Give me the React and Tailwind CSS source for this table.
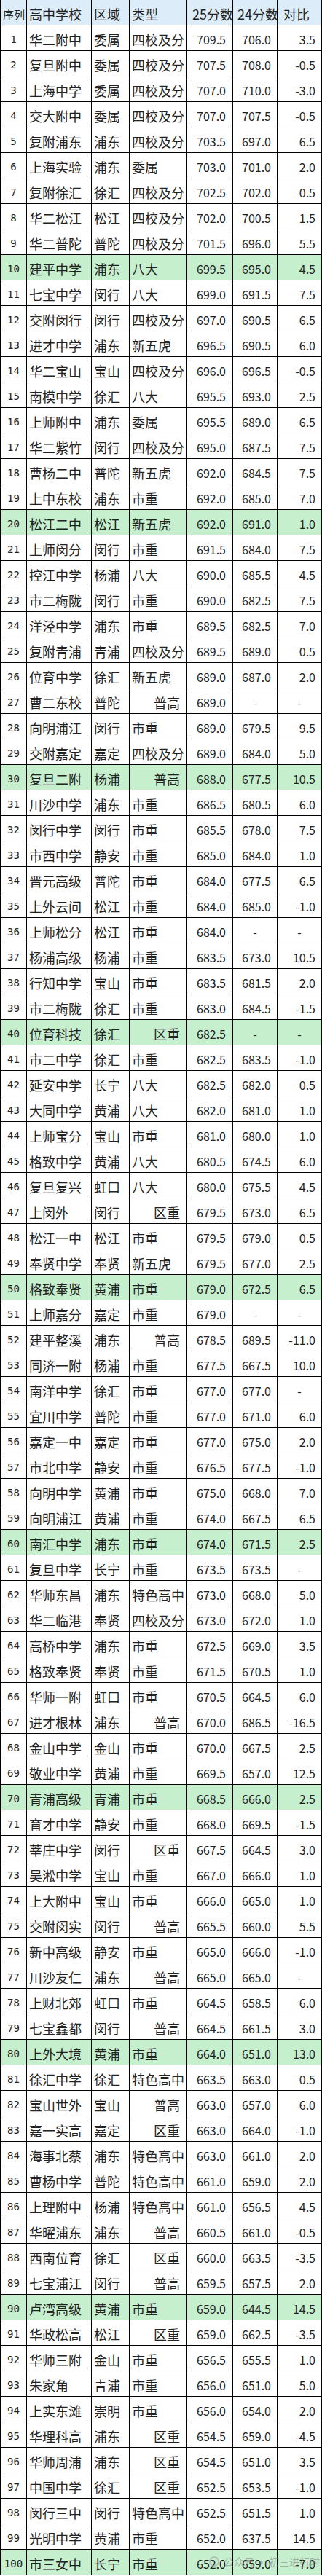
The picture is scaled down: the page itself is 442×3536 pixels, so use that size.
import React from "react";

const raw = `华二附中|委属|四校及分|709.5|706.0|3.5
复旦附中|委属|四校及分|707.5|708.0|-0.5
上海中学|委属|四校及分|707.0|710.0|-3.0
交大附中|委属|四校及分|707.0|707.5|-0.5
复附浦东|浦东|四校及分|703.5|697.0|6.5
上海实验|浦东|委属|703.0|701.0|2.0
复附徐汇|徐汇|四校及分|702.5|702.0|0.5
华二松江|松江|四校及分|702.0|700.5|1.5
华二普陀|普陀|四校及分|701.5|696.0|5.5
建平中学|浦东|八大|699.5|695.0|4.5
七宝中学|闵行|八大|699.0|691.5|7.5
交附闵行|闵行|四校及分|697.0|690.5|6.5
进才中学|浦东|新五虎|696.5|690.5|6.0
华二宝山|宝山|四校及分|696.0|696.5|-0.5
南模中学|徐汇|八大|695.5|693.0|2.5
上师附中|浦东|委属|695.5|689.0|6.5
华二紫竹|闵行|四校及分|695.0|687.5|7.5
曹杨二中|普陀|新五虎|692.0|684.5|7.5
上中东校|浦东|市重|692.0|685.0|7.0
松江二中|松江|新五虎|692.0|691.0|1.0
上师闵分|闵行|市重|691.5|684.0|7.5
控江中学|杨浦|八大|690.0|685.5|4.5
市二梅陇|闵行|市重|690.0|682.5|7.5
洋泾中学|浦东|市重|689.5|682.5|7.0
复附青浦|青浦|四校及分|689.5|689.0|0.5
位育中学|徐汇|新五虎|689.0|687.0|2.0
曹二东校|普陀|普高|689.0|-|-
向明浦江|闵行|市重|689.0|679.5|9.5
交附嘉定|嘉定|四校及分|689.0|684.0|5.0
复旦二附|杨浦|普高|688.0|677.5|10.5
川沙中学|浦东|市重|686.5|680.5|6.0
闵行中学|闵行|市重|685.5|678.0|7.5
市西中学|静安|市重|685.0|684.0|1.0
晋元高级|普陀|市重|684.0|677.5|6.5
上外云间|松江|市重|684.0|685.0|-1.0
上师松分|松江|市重|684.0|-|-
杨浦高级|杨浦|市重|683.5|673.0|10.5
行知中学|宝山|市重|683.5|681.5|2.0
市二梅陇|徐汇|市重|683.0|684.5|-1.5
位育科技|徐汇|区重|682.5|-|-
市二中学|徐汇|市重|682.5|683.5|-1.0
延安中学|长宁|八大|682.5|682.0|0.5
大同中学|黄浦|八大|682.0|681.0|1.0
上师宝分|宝山|市重|681.0|680.0|1.0
格致中学|黄浦|八大|680.5|674.5|6.0
复旦复兴|虹口|八大|680.0|675.5|4.5
上闵外|闵行|区重|679.5|673.0|6.5
松江一中|松江|市重|679.5|679.0|0.5
奉贤中学|奉贤|新五虎|679.5|677.0|2.5
格致奉贤|黄浦|市重|679.0|672.5|6.5
上师嘉分|嘉定|市重|679.0|-|-
建平整溪|浦东|普高|678.5|689.5|-11.0
同济一附|杨浦|市重|677.5|667.5|10.0
南洋中学|徐汇|市重|677.0|677.0|-
宜川中学|普陀|市重|677.0|671.0|6.0
嘉定一中|嘉定|市重|677.0|675.0|2.0
市北中学|静安|市重|676.5|677.5|-1.0
向明中学|黄浦|市重|675.0|668.0|7.0
向明浦江|黄浦|市重|674.0|667.5|6.5
南汇中学|浦东|市重|674.0|671.5|2.5
复旦中学|长宁|市重|673.5|673.5|-
华师东昌|浦东|特色高中|673.0|668.0|5.0
华二临港|奉贤|四校及分|673.0|672.0|1.0
高桥中学|浦东|市重|672.5|669.0|3.5
格致奉贤|奉贤|市重|671.5|670.5|1.0
华师一附|虹口|市重|670.5|664.5|6.0
进才根林|浦东|普高|670.0|686.5|-16.5
金山中学|金山|市重|670.0|667.5|2.5
敬业中学|黄浦|市重|669.5|657.0|12.5
青浦高级|青浦|市重|668.5|666.0|2.5
育才中学|静安|市重|668.0|669.5|-1.5
莘庄中学|闵行|区重|667.5|664.5|3.0
吴淞中学|宝山|市重|667.0|666.0|1.0
上大附中|宝山|市重|666.0|665.0|1.0
交附闵实|闵行|普高|665.5|660.0|5.5
新中高级|静安|市重|665.0|666.0|-1.0
川沙友仁|浦东|普高|665.0|665.0|-
上财北郊|虹口|市重|664.5|658.5|6.0
七宝鑫都|闵行|普高|664.5|661.5|3.0
上外大境|黄浦|市重|664.0|651.0|13.0
徐汇中学|徐汇|特色高中|663.5|663.0|0.5
宝山世外|宝山|普高|663.0|657.0|6.0
嘉一实高|嘉定|区重|663.0|664.0|-1.0
海事北蔡|浦东|特色高中|663.0|661.0|2.0
曹杨中学|普陀|特色高中|661.0|659.0|2.0
上理附中|杨浦|特色高中|661.0|656.5|4.5
华曜浦东|浦东|普高|660.5|661.0|-0.5
西南位育|徐汇|区重|660.0|663.5|-3.5
七宝浦江|闵行|普高|659.5|657.5|2.0
卢湾高级|黄浦|市重|659.0|644.5|14.5
华政松高|松江|区重|659.0|662.5|-3.5
华师三附|金山|市重|656.5|655.5|1.0
朱家角|青浦|市重|656.0|651.0|5.0
上实东滩|崇明|市重|656.0|654.0|2.0
华理科高|浦东|区重|654.5|659.0|-4.5
华师周浦|浦东|区重|654.5|651.0|3.5
中国中学|徐汇|区重|652.5|653.5|-1.0
闵行三中|闵行|特色高中|652.5|651.5|1.0
光明中学|黄浦|市重|652.0|637.5|14.5
市三女中|长宁|市重|652.0|659.0|-7.0`;

const rows = raw.split("\n").map((line, i) => {
  const [name, area, kind, s25, s24, diff] = line.split("|");
  return { n: i + 1, name, area, kind, s25, s24, diff };
});

const cell =
  "flex items-center h-[35px] border-r border-b border-black pt-1 whitespace-nowrap overflow-hidden";

function Row({ r }) {
  const bg = r.n % 10 === 0 ? "bg-[#c6efce]" : "bg-white";
  const rightKind = r.kind === "普高" || r.kind === "区重";
  return (
    <>
      <div className={`${cell} ${bg} justify-center font-['DejaVu_Sans_Mono',monospace] text-[14px]`}>
        {r.n}
      </div>
      <div className={`${cell} ${bg} pl-[3px]`}>{r.name}</div>
      <div className={`${cell} ${bg} pl-[3px]`}>{r.area}</div>
      <div className={`${cell} ${bg} ${rightKind ? "justify-end pr-[9px]" : "pl-[3px]"}`}>
        {r.kind}
      </div>
      <div className={`${cell} ${bg} justify-end pr-[9px] text-[16px]`}>{r.s25}</div>
      <div className={`${cell} ${bg} text-[16px] ${r.s24 === "-" ? "justify-center" : "justify-end pr-[8px]"}`}>
        {r.s24}
      </div>
      <div className={`${cell} ${bg} text-[16px] ${r.diff === "-" ? "justify-center" : "justify-end pr-[8px]"}`}>
        {r.diff}
      </div>
    </>
  );
}

export default function App() {
  return (
    <div className="relative w-[442px] bg-white text-[#222] text-[18px] leading-none font-['Noto_Sans_CJK_SC','Noto_Sans',sans-serif]">
      <div className="grid grid-cols-[36px_89px_52px_79px_63px_61px_61px] border-l border-black">
        <div className={`${cell} bg-[#dcedf9] pl-[3px] text-[15px]`}>序列</div>
        <div className={`${cell} bg-[#dcedf9] pl-[3px]`}>高中学校</div>
        <div className={`${cell} bg-[#dcedf9] pl-[3px]`}>区域</div>
        <div className={`${cell} bg-[#dcedf9] pl-[3px]`}>类型</div>
        <div className={`${cell} bg-[#dcedf9] pl-[7px]`}>25分数</div>
        <div className={`${cell} bg-[#dcedf9] pl-[6px]`}>24分数</div>
        <div className={`${cell} bg-[#dcedf9] pl-[8px]`}>对比</div>
        {rows.map((r) => (
          <Row key={r.n} r={r} />
        ))}
      </div>
      <div className="absolute left-[287px] top-[3509px] flex items-center gap-[6px] text-[14px] text-[#888]/60 pointer-events-none">
        <span className="w-[14px] h-[14px] rounded-full border-2 border-[#999]/50"></span>
        <span>公众号 · 初三进行时</span>
      </div>
    </div>
  );
}
